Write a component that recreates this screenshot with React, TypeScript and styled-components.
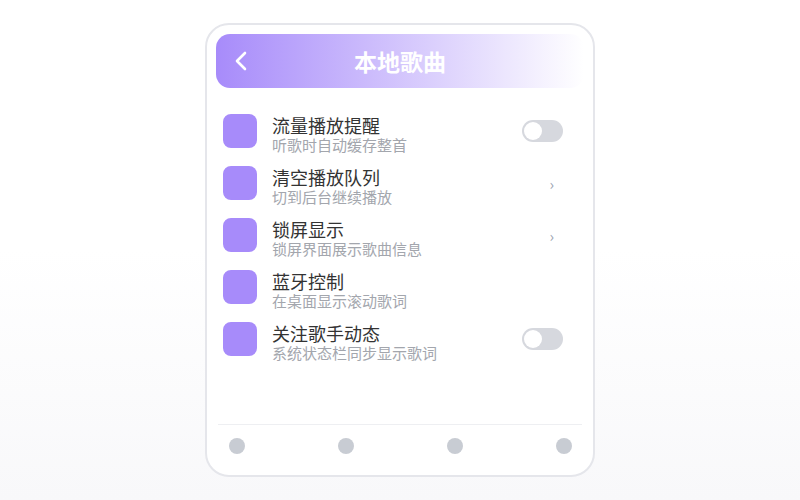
import styled, { createGlobalStyle } from "styled-components";

const GlobalStyle = createGlobalStyle`
    html, body {
        margin: 0;
        padding: 0;
        height: 100%;
    }
    body {
        background: linear-gradient(180deg, #ffffff 50%, #f8f8fa 100%);
        font-family: "Noto Sans CJK SC", "Noto Sans", sans-serif;
    }
`;

const Page = styled.div`
    height: 100vh;
    display: flex;
    align-items: center;
    justify-content: center;
`;

const Phone = styled.div`
    box-sizing: border-box;
    width: 390px;
    height: 454px;
    border: 2px solid #e5e6eb;
    border-radius: 24px;
    background: #fff;
    padding: 9px;
    display: flex;
    flex-direction: column;
`;

const Header = styled.div`
    position: relative;
    height: 54px;
    flex-shrink: 0;
    border-radius: 14px;
    background: linear-gradient(90deg, #a78bfa 0%, #ffffff 100%);
    display: flex;
    align-items: center;
    justify-content: center;
`;

const BackButton = styled.div`
    position: absolute;
    left: 16px;
    top: 17px;
    width: 18px;
    height: 20px;
    display: flex;
    align-items: center;
    justify-content: center;
`;

const Title = styled.h1`
    margin: 0;
    color: #fff;
    font-size: 23px;
    font-weight: 700;
`;

const List = styled.div`
    flex: 1;
    padding: 17px 7px 0;
`;

const Row = styled.div`
    box-sizing: border-box;
    height: 52px;
    padding: 9px 0;
    display: flex;
    align-items: center;
    gap: 15px;
`;

const Icon = styled.div`
    width: 34px;
    height: 34px;
    border-radius: 8px;
    background: #a78bfa;
    flex-shrink: 0;
`;

const Texts = styled.div`
    flex: 1;
    align-self: flex-start;
    margin-top: 1px;
    display: flex;
    flex-direction: column;
`;

const RowTitle = styled.div`
    font-size: 18px;
    line-height: 20px;
    color: #333;
`;

const RowSub = styled.div`
    font-size: 15px;
    line-height: 20px;
    color: #a3a6ad;
    white-space: nowrap;
`;

const Trailing = styled.div`
    width: 41px;
    margin-right: 14px;
    display: flex;
    justify-content: flex-end;
`;

const Switch = styled.div<{ $on?: boolean }>`
    position: relative;
    width: 41px;
    height: 22px;
    border-radius: 11px;
    background: ${(p) => (p.$on ? "#a78bfa" : "#d6d8de")};

    &::after {
        content: "";
        position: absolute;
        top: 2px;
        left: ${(p) => (p.$on ? "21px" : "2px")};
        width: 18px;
        height: 18px;
        border-radius: 50%;
        background: #fff;
    }
`;

const Chevron = styled.span`
    font-size: 15px;
    color: #9ca3af;
    padding-right: 9px;
    line-height: 1;
`;

const BottomNav = styled.div`
    flex-shrink: 0;
    margin: 0 2px;
    border-top: 1px solid #eeeff2;
    padding: 13px 10px 12px 11px;
    display: flex;
    justify-content: space-between;
`;

const Dot = styled.div`
    width: 16px;
    height: 16px;
    border-radius: 50%;
    background: #c8ccd3;
`;

type Item = {
    title: string;
    sub: string;
    trailing: "switch" | "arrow" | "none";
};

const items: Item[] = [
    { title: "流量播放提醒", sub: "听歌时自动缓存整首", trailing: "switch" },
    { title: "清空播放队列", sub: "切到后台继续播放", trailing: "arrow" },
    { title: "锁屏显示", sub: "锁屏界面展示歌曲信息", trailing: "arrow" },
    { title: "蓝牙控制", sub: "在桌面显示滚动歌词", trailing: "none" },
    { title: "关注歌手动态", sub: "系统状态栏同步显示歌词", trailing: "switch" },
];

export default function App() {
    return (
        <Page>
            <GlobalStyle />
            <Phone>
                <Header>
                    <BackButton>
                        <svg width="14" height="20" viewBox="0 0 14 20" fill="none">
                            <polyline
                                points="11,2 3,10 11,18"
                                stroke="#fff"
                                strokeWidth="2.6"
                                strokeLinecap="round"
                                strokeLinejoin="round"
                            />
                        </svg>
                    </BackButton>
                    <Title>本地歌曲</Title>
                </Header>

                <List>
                    {items.map((it) => (
                        <Row key={it.title}>
                            <Icon />
                            <Texts>
                                <RowTitle>{it.title}</RowTitle>
                                <RowSub>{it.sub}</RowSub>
                            </Texts>
                            <Trailing>
                                {it.trailing === "switch" && <Switch />}
                                {it.trailing === "arrow" && <Chevron>›</Chevron>}
                            </Trailing>
                        </Row>
                    ))}
                </List>

                <BottomNav>
                    <Dot />
                    <Dot />
                    <Dot />
                    <Dot />
                </BottomNav>
            </Phone>
        </Page>
    );
}
